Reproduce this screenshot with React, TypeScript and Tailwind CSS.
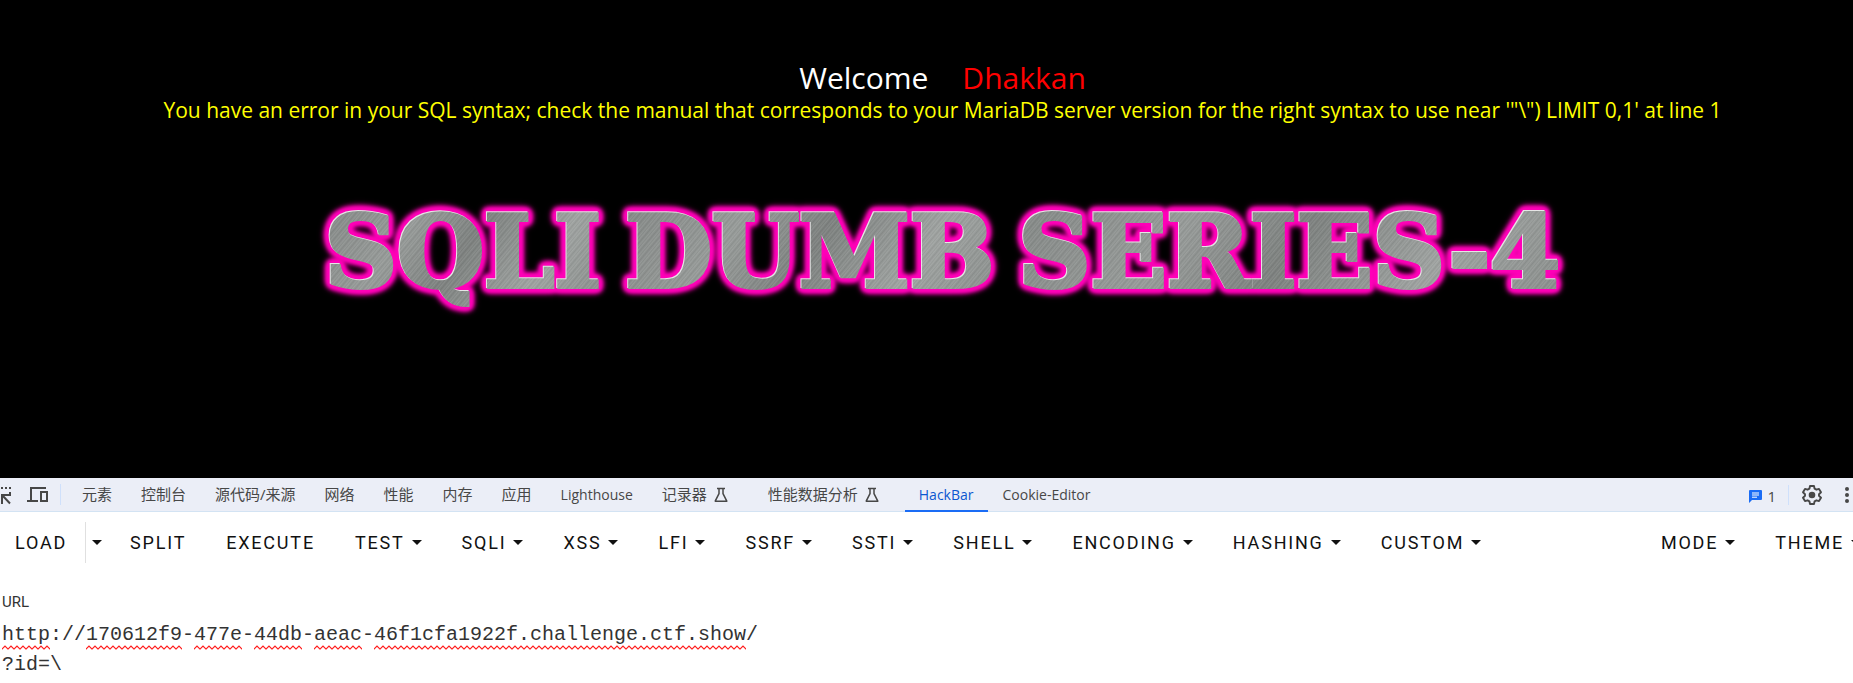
import { useState } from "react";
import type { ReactNode } from "react";

function Flask() {
  return (
    <svg viewBox="0 0 14 16" className="ml-[7px] h-4 w-[14px]" fill="none" stroke="currentColor" strokeWidth="1.5" aria-hidden="true">
      <path d="M3 1.5h8M5 1.5v5.2L1.2 14.2h11.6L9 6.7V1.5" strokeLinejoin="round" />
    </svg>
  );
}

function Caret() {
  return (
    <svg viewBox="0 0 10 5" className="h-[5px] w-[10px] shrink-0" fill="currentColor" aria-hidden="true">
      <path d="M0 0h10L5 5z" />
    </svg>
  );
}

const tabs: { label: string; flask?: boolean; latin?: boolean }[] = [
  { label: "元素" },
  { label: "控制台" },
  { label: "源代码/来源" },
  { label: "网络" },
  { label: "性能" },
  { label: "内存" },
  { label: "应用" },
  { label: "Lighthouse", latin: true },
  { label: "记录器", flask: true },
  { label: "性能数据分析", flask: true },
  { label: "HackBar", latin: true },
  { label: "Cookie-Editor", latin: true },
];

const menus = ["TEST", "SQLI", "XSS", "LFI", "SSRF", "SSTI", "SHELL", "ENCODING", "HASHING", "CUSTOM"];

function ToolButton({ children, menu = false }: { children: ReactNode; menu?: boolean }) {
  return (
    <button type="button" className="flex h-full items-center gap-[7px] px-[20px]">
      {children}
      {menu && <Caret />}
    </button>
  );
}

function Banner() {
  return (
    <h1 className="mt-[72px] flex justify-center gap-[24px] font-['DejaVu_Serif'] text-[100px] leading-[116px] font-bold [filter:drop-shadow(-1px_-1px_0_#e6e6e6)_drop-shadow(0_0_2px_#ff00b8)_drop-shadow(0_0_2px_#ff00b8)_drop-shadow(0_0_1px_#ff00b8)_drop-shadow(0_0_2px_#ff00b8)_drop-shadow(0_0_2px_#ff00b8)]">
      {["SQLI", "DUMB", "SERIES-4"].map((word) => (
        <span
          key={word}
          className="bg-[repeating-linear-gradient(130deg,#00000010_0px,#ffffff10_2px,#00000008_3px,#ffffff14_4px,#00000010_6px),linear-gradient(125deg,#848886,#989c9a_30%,#7e8280_50%,#a0a4a2_75%,#8a8e8c)] bg-clip-text text-transparent [-webkit-text-stroke:4px_transparent]"
        >
          {word}
        </span>
      ))}
    </h1>
  );
}

function Squiggle({ id, start, length }: { id: string; start: number; length: number }) {
  return (
    <svg className="absolute top-[25px] h-[5px]" style={{ left: `${start}ch`, width: `${length}ch` }} aria-hidden="true">
      <defs>
        <pattern id={id} width="6" height="5" patternUnits="userSpaceOnUse">
          <path d="M-1 4.7L0 4 3 1 6 4 7 4.7" fill="none" stroke="#ff1a1a" strokeWidth="1.2" />
        </pattern>
      </defs>
      <rect width="100%" height="5" fill={`url(#${id})`} />
    </svg>
  );
}

const flagged = [
  [0, 4],
  [7, 8],
  [16, 4],
  [21, 4],
  [26, 4],
  [31, 31],
];

export default function App() {
  const [active, setActive] = useState("HackBar");
  const [url, setUrl] = useState("http://170612f9-477e-44db-aeac-46f1cfa1922f.challenge.ctf.show/\n?id=\\");

  return (
    <div className="flex min-h-screen flex-col overflow-hidden bg-white">
      <main className="h-[478px] bg-black pt-[58px] pl-[32px] text-center font-['Open_Sans',sans-serif]">
        <p className="flex justify-center gap-[34px] text-[30px] leading-10 text-white">
          <span>Welcome</span>
          <span className="text-[#ff0000]">Dhakkan</span>
        </p>
        <p className="text-[21px] leading-[24px] text-[#ffff00]">
          You have an error in your SQL syntax; check the manual that corresponds to your MariaDB server version for the right syntax to use near '"\") LIMIT 0,1' at line 1
        </p>
        <Banner />
      </main>

      <div className="flex h-[34px] items-stretch border-b border-[#d3e3f3] bg-[#ebeef7] font-['Open_Sans','Noto_Sans_CJK_SC',sans-serif] text-[15px] text-[#474747]">
        <button type="button" aria-label="选择元素" className="flex w-[12px] items-center overflow-hidden">
          <svg viewBox="0 0 12 20" className="h-5 w-3" fill="none" stroke="currentColor" strokeWidth="2">
            <path d="M1 3h2M5 3h2M9 3h2M9 8h2" />
            <path d="M2 19V10H11M2.5 10.5L10 18.5" />
          </svg>
        </button>
        <button type="button" aria-label="切换设备工具栏" className="ml-[15px] flex items-center">
          <svg viewBox="0 0 21 16" className="h-4 w-[21px]" fill="none" stroke="currentColor" strokeWidth="2">
            <path d="M19 1H4v13M0 14h11" />
            <rect x="14" y="5" width="6" height="9" />
          </svg>
        </button>
        <span className="my-[6px] ml-3 w-px bg-[#cfe0fb]" />
        <div role="tablist" className="ml-[7px] flex gap-px">
          {tabs.map(({ label, flask, latin }) => (
            <button
              key={label}
              type="button"
              role="tab"
              aria-selected={active === label}
              onClick={() => setActive(label)}
              className={`relative flex items-center whitespace-nowrap ${flask ? "pr-[25px] pl-[14px]" : "px-[14px]"} ${latin ? "text-[14px]" : ""} ${active === label ? "text-[#0b57d0]" : ""}`}
            >
              {label}
              {flask && <Flask />}
              {active === label && <span className="absolute inset-x-0 -bottom-px h-[2px] bg-[#1a6cf5]" />}
            </button>
          ))}
        </div>
        <div className="-mr-[4px] ml-auto flex items-center">
          <button type="button" className="flex items-center gap-[5px] pt-[3px]">
            <svg viewBox="0 0 13 13" className="size-[13px]" aria-hidden="true">
              <path d="M1 0h11a1 1 0 011 1v8a1 1 0 01-1 1H3l-3 3V1a1 1 0 011-1z" fill="#1a6cf5" />
              <path d="M3 3h7M3 5h7M3 7.2h5" stroke="#fff" strokeWidth="1" />
            </svg>
            1
          </button>
          <span className="mr-[13px] ml-3 h-5 w-px bg-[#cfe0fb]" />
          <button type="button" aria-label="设置">
            <svg viewBox="2 2 20 20" className="size-[20px]" fill="none" stroke="currentColor" strokeWidth="1.9" strokeLinejoin="round">
              <path d="M10 3h4l.6 2.7 1.8 1 2.6-.8 2 3.4-2 1.9v1.6l2 1.9-2 3.4-2.6-.8-1.8 1L14 21h-4l-.6-2.7-1.8-1-2.6.8-2-3.4 2-1.9v-1.6L3 9.3l2-3.4 2.6.8 1.8-1z" />
              <circle cx="12" cy="12" r="3.3" fill="currentColor" stroke="none" />
            </svg>
          </button>
          <button type="button" aria-label="更多" className="ml-[15px]">
            <svg viewBox="0 0 20 20" className="size-5" fill="currentColor">
              <circle cx="10" cy="4" r="2" />
              <circle cx="10" cy="10" r="2" />
              <circle cx="10" cy="16" r="2" />
            </svg>
          </button>
        </div>
      </div>

      <nav className="-mr-7 flex h-[61px] items-stretch font-['Roboto',sans-serif] text-[18px] tracking-widest text-[#111111]">
        <button type="button" className="pr-[18px] pl-[15px]">
          LOAD
        </button>
        <span className="my-[10px] w-px bg-[#e0e0e0]" />
        <button type="button" aria-label="LOAD" className="flex w-6 items-center pl-[6px]">
          <Caret />
        </button>
        <ToolButton>SPLIT</ToolButton>
        <ToolButton>EXECUTE</ToolButton>
        {menus.map((m) => (
          <ToolButton key={m} menu>
            {m}
          </ToolButton>
        ))}
        <div className="ml-auto flex">
          <ToolButton menu>MODE</ToolButton>
          <ToolButton menu>THEME</ToolButton>
        </div>
      </nav>

      <div className="mt-[19px] px-[2px] text-[#333333]">
        <label htmlFor="url" className="block font-['Roboto',sans-serif] text-[15px] leading-5">
          URL
        </label>
        <div className="relative mt-[8px] font-['Liberation_Mono',monospace] text-[20px] leading-[30px]">
          <textarea
            id="url"
            rows={2}
            spellCheck={false}
            value={url}
            onChange={(e) => setUrl(e.target.value)}
            className="block w-full resize-none overflow-hidden bg-transparent outline-none"
          />
          <div className="pointer-events-none absolute inset-x-0 top-0">
            {flagged.map(([start, length]) => (
              <Squiggle key={start} id={`wave-${start}`} start={start} length={length} />
            ))}
          </div>
        </div>
      </div>
    </div>
  );
}
